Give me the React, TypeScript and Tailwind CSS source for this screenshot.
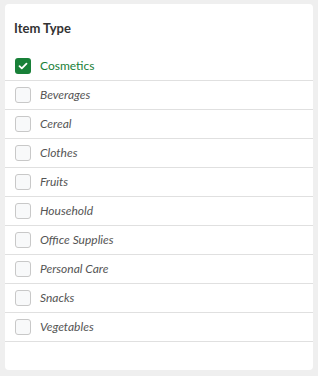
import React from 'react';

const items = [
  'Cosmetics',
  'Beverages',
  'Cereal',
  'Clothes',
  'Fruits',
  'Household',
  'Office Supplies',
  'Personal Care',
  'Snacks',
  'Vegetables',
];

export default function App() {
  const selected = ['Cosmetics'];

  return (
    <div
      className="w-[318px] h-[376px] bg-[#efefef] pt-[4px] pl-[5px] pr-[5px] pb-[6px]"
      style={{ fontFamily: 'Lato, "Open Sans", sans-serif' }}
    >
      <div className="bg-white rounded-[4px] h-full flex flex-col">
        {/* Header */}
        <div className="h-[48px] flex items-center pl-[9px] pt-[1px]">
          <h2 className="text-[13px] font-bold text-[#333]">Item Type</h2>
        </div>

        {/* Options */}
        <ul>
          {items.map(item => {
            const checked = selected.includes(item);
            return (
              <li key={item} className="h-[29px] border-b border-[#e0e0e0] flex items-center pl-[10px]">
                {checked ? (
                  <span className="w-[16px] h-[16px] rounded-[3px] bg-[#188038] flex items-center justify-center">
                    <svg width="10" height="10" viewBox="0 0 10 10" fill="none">
                      <path d="M1.5 5.2l2.3 2.2L8.5 2.6" stroke="white" strokeWidth="1.8" strokeLinecap="round" strokeLinejoin="round" />
                    </svg>
                  </span>
                ) : (
                  <span className="w-[16px] h-[16px] rounded-[3px] border border-[#c8c8c8] bg-[#f8f9fa]" />
                )}
                <span
                  className={
                    checked
                      ? 'ml-[9px] text-[12px] text-[#188038]'
                      : 'ml-[9px] text-[12px] italic text-[#555]'
                  }
                >
                  {item}
                </span>
              </li>
            );
          })}
        </ul>
      </div>
    </div>
  );
}
